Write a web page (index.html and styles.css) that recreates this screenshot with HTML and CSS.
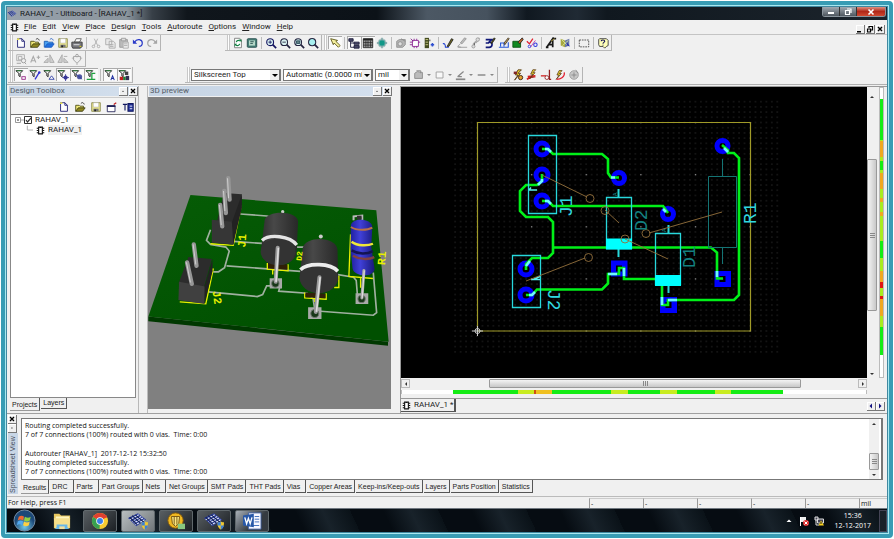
FILE: index.html
```html
<!DOCTYPE html>
<html lang="en">
<head>
<meta charset="utf-8">
<title>RAHAV_1 - Ultiboard</title>
<link rel="stylesheet" href="styles.css">
</head>
<body>
<svg class="defs" aria-hidden="true">
  <symbol id="chip" viewBox="0 0 12 12"><path d="M3.500 1.500h5v9h-5z" fill="#fff" stroke="#111" stroke-width="1.500"/><path d="M1 3h2M1 6h2M1 9h2M9 3h2M9 6h2M9 9h2" stroke="#111" stroke-width="1.600"/><path d="M5 1.500h2v1H5z"/></symbol>
  <symbol id="new" viewBox="0 0 14 14"><path d="M3 2h5l3 3v7H3z" fill="#fff" stroke="#181870"/><path d="M8 2v3h3" fill="none" stroke="#181870"/><path d="M3 1.500h2v2H2z" fill="#e8e050"/></symbol>
  <symbol id="open" viewBox="0 0 14 14"><path d="M2 12V5h4l1 1h4v2" fill="#f0e878" stroke="#4a4a10"/><path d="M2 12l3-4h8l-3 4z" fill="#908820" stroke="#3c3c10"/><path d="M8 3c2-2 3-1 4 1" fill="none" stroke="#222"/></symbol>
  <symbol id="openblue" viewBox="0 0 14 14"><path d="M1.500 12V5h4l1 1h5v2" fill="#48a0f0" stroke="#1858b0"/><path d="M2 12l3-4h8l-3 4z" fill="#2070e0" stroke="#1858c0"/><path d="M8 3c2-2 3-1 4 1" fill="none" stroke="#1858c0"/></symbol>
  <symbol id="save" viewBox="0 0 14 14"><path d="M2 2h10v10H2z" fill="#e8e490" stroke="#88884a"/><path d="M4 2h6v5H4z" fill="#fff" stroke="#aaa" stroke-width=".5"/><path d="M4 9h6v3H4z" fill="#777"/><path d="M5 10h2v2H5z" fill="#222"/></symbol>
  <symbol id="print" viewBox="0 0 14 14"><path d="M4 6l2-4h6l-2 4z" fill="#fff" stroke="#555"/><path d="M1 6h12v5l-2 2H2l-1-2z" fill="#77777d" stroke="#333"/><path d="M3 9h7" stroke="#eee"/><path d="M10 11h2" stroke="#e8e000"/></symbol>
  <symbol id="cut" viewBox="0 0 14 14"><path d="M5 2l4 8M9 2l-4 8" stroke="#aaa" fill="none"/><circle cx="4" cy="11" r="1.500" fill="none" stroke="#aaa"/><circle cx="10" cy="11" r="1.500" fill="none" stroke="#aaa"/></symbol>
  <symbol id="copy" viewBox="0 0 14 14"><path d="M2 2h5l2 2v5H2zM6 5h5l2 2v6H6z" fill="#e8e8e8" stroke="#aaa"/><path d="M7 9h4M7 11h4" stroke="#aaa"/></symbol>
  <symbol id="paste" viewBox="0 0 14 14"><path d="M2 3h9v9H2z" fill="#bbb" stroke="#999"/><path d="M4 1.500h5v3H4z" fill="#ddd" stroke="#999"/><path d="M6 6h6v7H6z" fill="#eee" stroke="#aaa"/><path d="M7 8h4M7 10h4" stroke="#aaa"/></symbol>
  <symbol id="undo" viewBox="0 0 14 14"><path d="M3 6c3-5 9-3 9 1 0 3-2 4-4 4" fill="none" stroke="#2838c8" stroke-width="1.400"/><path d="M1 3v5h5z" fill="#2838c8"/></symbol>
  <symbol id="redo" viewBox="0 0 14 14"><path d="M11 6C8 1 2 3 2 7c0 3 2 4 4 4" fill="none" stroke="#a5a5a5" stroke-width="1.400"/><path d="M13 3v5H8z" fill="#a5a5a5"/></symbol>
  <symbol id="refresh" viewBox="0 0 14 14"><path d="M3 1.500h6l2 2v9H3z" fill="#fff" stroke="#777"/><path d="M5 6c1-3 4-2 4-1M9 8c-1 3-4 2-4 1" fill="none" stroke="#108040" stroke-width="1.500"/><path d="M8 3h3v3zM3 11V8h3z" fill="#108040"/></symbol>
  <symbol id="fullscreen" viewBox="0 0 14 14"><rect x="1.500" y="2" width="11" height="10" rx="1" fill="#488078" stroke="#204848"/><path d="M3.500 4h7v6h-7z" fill="#b5d8c8"/><path d="M5 5.500h4M5 7.500h3" stroke="#204848"/></symbol>
  <symbol id="zoomin" viewBox="0 0 14 14"><circle cx="6" cy="6" r="4" fill="#d8f0f0" stroke="#151560" stroke-width="1.300"/><path d="M9 9l4 4" stroke="#151560" stroke-width="2"/><path d="M4 6h4M6 4v4" stroke="#151560"/></symbol>
  <symbol id="zoomout" viewBox="0 0 14 14"><circle cx="6" cy="6" r="4" fill="#d8f0f0" stroke="#252540" stroke-width="1.200"/><path d="M9 9l4 4" stroke="#252540" stroke-width="2"/><path d="M4 6h4" stroke="#252540"/></symbol>
  <symbol id="zoomwin" viewBox="0 0 14 14"><circle cx="6" cy="6" r="4" fill="#d8f0f0" stroke="#252540" stroke-width="1.200"/><path d="M9 9l4 4" stroke="#252540" stroke-width="2"/><path d="M4 4.500h4v3H4z" fill="#688" stroke="#245"/></symbol>
  <symbol id="zoomfull" viewBox="0 0 14 14"><circle cx="6" cy="6" r="4.200" fill="#a8f0f0" stroke="#252540" stroke-width="1.200"/><path d="M9 9l4 4" stroke="#252540" stroke-width="2"/></symbol>
  <symbol id="select" viewBox="0 0 14 14"><path d="M2 2l3 7 1-2 5 5 2-2-5-5 2-1z" fill="#f5f0a0" stroke="#555010"/></symbol>
  <symbol id="tree" viewBox="0 0 14 14"><path d="M1 2h5v3H1zM7 6h6v2.500H7zM7 10h6v3H7z" fill="#484868" stroke="#181838"/><path d="M3 5v7h4M3 7h4" fill="none" stroke="#181838"/></symbol>
  <symbol id="grid" viewBox="0 0 14 14"><path d="M1.500 2h11v10.500h-11z" fill="#999" stroke="#222"/><path d="M1.500 3h11" stroke="#222" stroke-width="2"/><path d="M1.500 6.500h11M1.500 9.500h11M4.500 4v8M7 4v8M10 4v8" stroke="#222" stroke-width=".8"/></symbol>
  <symbol id="board" viewBox="0 0 14 14"><circle cx="7" cy="7" r="5.200" fill="#a8c0c0"/><path d="M7 1v12M1 7h12" stroke="#70a0a0" stroke-width="1.500"/><path d="M4 4h6v6H4z" fill="#109888"/></symbol>
  <symbol id="greybox" viewBox="0 0 14 14"><path d="M2 5l3-2h7v6l-3 3H2z" fill="#b4b4b4" stroke="#909090"/><circle cx="6" cy="8" r="2.500" fill="#ddd" stroke="#909090"/><path d="M7 2l5 3" stroke="#888"/></symbol>
  <symbol id="partedit" viewBox="0 0 14 14"><path d="M4 4h7v7H4z" fill="#fff" stroke="#882090"/><path d="M2 2l3 3M1 6h3M1 9h3M6 2v2M9 2v2M6 11v2M9 11v2M11 6h2" stroke="#882090"/></symbol>
  <symbol id="partchip" viewBox="0 0 14 14"><path d="M2 1h5v12H2z" fill="#444c20"/><path d="M3 3h3M3 6h3M3 9h3" stroke="#d8d890"/><path d="M9 9h4M11 7v4" stroke="#3050d0" stroke-width="1.800"/><path d="M8 3v2" stroke="#222"/></symbol>
  <symbol id="pen" viewBox="0 0 14 14"><path d="M1 8c2-1 3 1 3 4h4" fill="none" stroke="#2040d0" stroke-width="1.300"/><path d="M6 11l5-9 2 1-5 8z" fill="#706820" stroke="#222"/></symbol>
  <symbol id="greypen" viewBox="0 0 14 14"><path d="M5 7l5-6 2 1-5 6z" fill="#bbb" stroke="#999"/><path d="M2 12h11M5 8l-3 3 4 1" fill="none" stroke="#999"/></symbol>
  <symbol id="greyvia" viewBox="0 0 14 14"><path d="M4 12V8l3-3M11 1L7 7" stroke="#aaa" stroke-width="1.500"/><circle cx="9" cy="3" r="2" fill="#ddd" stroke="#999"/><circle cx="4" cy="11" r="1.800" fill="#ddd" stroke="#999"/></symbol>
  <symbol id="follow" viewBox="0 0 14 14"><path d="M2 3h7l-3 3c5 0 4 6 0 6H2M2 7h4" fill="none" stroke="#101878" stroke-width="2"/><path d="M8 7l4-6 1 1-4 6z" fill="#666010" stroke="#222"/></symbol>
  <symbol id="linebus" viewBox="0 0 14 14"><path d="M1 12h11V6M3 11V7h4v4" fill="none" stroke="#2858d8" stroke-width="1.300"/><path d="M7 7l5-6 1 1-5 7z" fill="#d8a850" stroke="#333"/></symbol>
  <symbol id="copper" viewBox="0 0 14 14"><path d="M1 5h9v7H1z" fill="#108820" stroke="#085010"/><path d="M7 6l5-5 1 2-4 5z" fill="#c06028" stroke="#222"/></symbol>
  <symbol id="drc" viewBox="0 0 14 14"><path d="M1 5l3 3 4-6" fill="none" stroke="#e02030" stroke-width="1.500"/><path d="M5 12l6-8" stroke="#c030a0"/><circle cx="11" cy="9" r="2" fill="none" stroke="#3038e0" stroke-width="1.200"/><circle cx="4" cy="11" r="1.500" fill="none" stroke="#3038e0"/></symbol>
  <symbol id="text" viewBox="0 0 14 14"><path d="M2 12L9 2v10M4 9h6M10 2h3M1 12h3" fill="none" stroke="#181818" stroke-width="2"/><path d="M7 5l4-3" stroke="#c8b040"/></symbol>
  <symbol id="threed" viewBox="0 0 14 14"><path d="M2 2l5 2v8l-5-2z" fill="#a8a840"/><path d="M7 4l5-2v8l-5 2z" fill="#6878a8"/><path d="M3 3l8 8M4 10l7-6" stroke="#d8e8a0"/><path d="M9 6l4 5-4-1z" fill="#2830b0"/></symbol>
  <symbol id="marquee" viewBox="0 0 14 14"><path d="M1.500 3.500h11v8h-11z" fill="none" stroke="#444" stroke-dasharray="2 1"/></symbol>
  <symbol id="help" viewBox="0 0 14 14"><path d="M3 2h8l2 2v6l-2 1-2 2-2-2H3L2 9V3z" fill="#ffffb8" stroke="#333"/><path d="M5 5c0-2 4-2 4 0 0 1-2 1-2 3M7 9v1" fill="none" stroke="#181858" stroke-width="1.300"/></symbol>
  <symbol id="g1" viewBox="0 0 14 14"><path d="M2 2h9v7H2zM4 4h4v4H4z" fill="none" stroke="#aaa"/><circle cx="10" cy="9" r="2.500" fill="#eee" stroke="#999"/><path d="M11 11l2 2M2 12h5" stroke="#999"/></symbol>
  <symbol id="g2" viewBox="0 0 14 14"><path d="M2 11l3-7 3 7M3 9h4M9 5h4M11 3v4" fill="none" stroke="#aaa" stroke-width="1.300"/></symbol>
  <symbol id="g3" viewBox="0 0 14 14"><path d="M8 11V2l5 9zM1 11l5-5v5z" fill="#d0d0d0" stroke="#a8a8a8"/><path d="M2 4h4" stroke="#aaa"/></symbol>
  <symbol id="g4" viewBox="0 0 14 14"><path d="M6 11V2l-5 9zM13 11L8 6v5z" fill="#d0d0d0" stroke="#a8a8a8"/><path d="M8 4h4" stroke="#aaa"/></symbol>
  <symbol id="g5" viewBox="0 0 14 14"><path d="M3 4h8v4l-4 4-4-4z" fill="#eee" stroke="#999"/><circle cx="7" cy="3" r="1.500" fill="#eee" stroke="#999"/><path d="M1 6h2M11 6h2M7 12v2" stroke="#aaa"/></symbol>
  <symbol id="funnel" viewBox="0 0 14 14"><path d="M1 2h8L6 5v4L4.500 8V5z" fill="#fff" stroke="#222" stroke-width="1.100"/><path d="M2 2h6" stroke="#208030"/></symbol>
  <symbol id="area" viewBox="0 0 14 14"><path d="M2 5l3-2 6 1v7H2z" fill="#bbb" stroke="#888"/><path d="M4 2h5v3" stroke="#888" fill="none"/></symbol>
  <symbol id="square" viewBox="0 0 14 14"><path d="M2.500 3.500h8v7h-8z" fill="#f8f8f8" stroke="#999"/></symbol>
  <symbol id="pencolor" viewBox="0 0 14 14"><path d="M1 12h11" stroke="#888" stroke-width="2"/><path d="M3 9l7-6M3 9h5" stroke="#888" stroke-width="1.500"/></symbol>
  <symbol id="dash" viewBox="0 0 14 14"><path d="M2 7h9" stroke="#999" stroke-width="2"/></symbol>
  <symbol id="bolt" viewBox="0 0 14 14"><path d="M7 1L4 7h3l-4 6 7-8H7l4-4z" fill="#f0d830" stroke="#503010"/></symbol>
  <symbol id="newwin" viewBox="0 0 14 14"><path d="M1.500 5.500h9v7h-9z" fill="#fff" stroke="#222258"/><path d="M1 6h10" stroke="#222258" stroke-width="2"/><path d="M9 4l3-2" stroke="#c02020" stroke-width="1.500"/></symbol>
  <symbol id="rename" viewBox="0 0 14 14"><path d="M1 4h5M3.500 4v7M7 3h6v9H7z" fill="#2838a0" stroke="#101860" stroke-width="1.300"/><path d="M9 6h3M9 9h3" stroke="#fff"/></symbol>
  <symbol id="pcb" viewBox="0 0 24 20"><path d="M1 7l12-6 10 8-12 8z" fill="#2c3f9c"/><path d="M3 9l11-6M6 11l11-6M8 13l11-6M10 15l11-6" stroke="#dfe6f8" stroke-width="1.300"/><path d="M3 6l9 9M6 4l10 9M10 3l10 9" stroke="#101c50" stroke-width="1.300"/></symbol>
  <symbol id="shield" viewBox="0 0 10 10"><path d="M5 0c2 1 3 1 4 1 0 5-1 7-4 9-3-2-4-4-4-9 1 0 2 0 4-1z" fill="#f0c830"/><path d="M5 0C3 1 2 1 1 1v4h4zM5 5h4c-1 3-2 4-4 5z" fill="#3c80d8"/></symbol>
</svg>

<div class="window">
  <header class="titlebar">
    <svg class="app-icon" aria-hidden="true"><use href="#pcb"/></svg>
    <h1>RAHAV_1 - Ultiboard - [RAHAV_1 *]</h1>
    <div class="win-controls">
      <button aria-label="Minimize"><svg viewBox="0 0 10 8"><path d="M2 4h6v2H2z" fill="#fff"/></svg></button><button aria-label="Restore"><svg viewBox="0 0 10 8"><path d="M2.500 2.500h4v4h-4zM4 1h4v4" fill="none" stroke="#fff" stroke-width="1.200"/></svg></button><button class="close" aria-label="Close"><svg viewBox="0 0 10 8"><path d="M2.500 1.500l5 5M7.500 1.500l-5 5" stroke="#fff" stroke-width="1.600"/></svg></button>
    </div>
  </header>

  <nav class="menubar">
    <svg class="chip" aria-hidden="true"><use href="#chip"/></svg>
    <button><u>F</u>ile</button><button><u>E</u>dit</button><button><u>V</u>iew</button><button><u>P</u>lace</button><button><u>D</u>esign</button><button><u>T</u>ools</button><button><u>A</u>utoroute</button><button><u>O</u>ptions</button><button><u>W</u>indow</button><button><u>H</u>elp</button>
    <div class="mdi">
      <button class="mini" aria-label="Minimize document"><svg viewBox="0 0 8 8"><path d="M1 6h4v1.500H1z"/></svg></button><button class="mini" aria-label="Restore document"><svg viewBox="0 0 8 8"><path d="M1.500 4h3v3h-3zM3 3V1.500h3.500V5H5" fill="none" stroke="#000" stroke-width="1.200"/></svg></button><button class="mini" aria-label="Close document"><svg viewBox="0 0 8 8"><path d="M2 2l4 4M6 2L2 6" stroke="#000" stroke-width="1.400"/></svg></button>
    </div>
  </nav>

  <section class="toolbars">
    <div class="toolrow">
      <div class="group">
        <button aria-label="New"><svg><use href="#new"/></svg></button><button aria-label="Open"><svg><use href="#open"/></svg></button><button aria-label="Open samples"><svg><use href="#openblue"/></svg></button><button aria-label="Save"><svg><use href="#save"/></svg></button><button aria-label="Print"><svg><use href="#print"/></svg></button><i></i><button aria-label="Cut"><svg><use href="#cut"/></svg></button><button aria-label="Copy"><svg><use href="#copy"/></svg></button><button aria-label="Paste"><svg><use href="#paste"/></svg></button><button aria-label="Undo"><svg><use href="#undo"/></svg></button><button aria-label="Redo"><svg><use href="#redo"/></svg></button>
      </div>
      <div class="group spaced">
        <button aria-label="Refresh"><svg><use href="#refresh"/></svg></button><button aria-label="Full screen"><svg><use href="#fullscreen"/></svg></button><i></i><button aria-label="Zoom in"><svg><use href="#zoomin"/></svg></button><button aria-label="Zoom out"><svg><use href="#zoomout"/></svg></button><button aria-label="Zoom window"><svg><use href="#zoomwin"/></svg></button><button aria-label="Zoom full"><svg><use href="#zoomfull"/></svg></button>
      </div>
      <div class="group">
        <button class="on" aria-label="Select"><svg><use href="#select"/></svg></button><i></i><button class="on" aria-label="Design toolbox"><svg><use href="#tree"/></svg></button><button class="on" aria-label="Spreadsheet view"><svg><use href="#grid"/></svg></button><button aria-label="Board wizard"><svg><use href="#board"/></svg></button><i></i><button aria-label="Part wizard"><svg><use href="#greybox"/></svg></button><button aria-label="Edit part"><svg><use href="#partedit"/></svg></button><button aria-label="Place part"><svg><use href="#partchip"/></svg></button><i></i><button aria-label="Line"><svg><use href="#pen"/></svg></button><button aria-label="Place trace"><svg><use href="#greypen"/></svg></button><button aria-label="Via"><svg><use href="#greyvia"/></svg></button><button aria-label="Follow-me"><svg><use href="#follow"/></svg></button><button aria-label="Connection machine"><svg><use href="#linebus"/></svg></button><button aria-label="Copper area"><svg><use href="#copper"/></svg></button><button aria-label="Check"><svg><use href="#drc"/></svg></button><i></i><button aria-label="Text"><svg><use href="#text"/></svg></button><button aria-label="3D"><svg><use href="#threed"/></svg></button><i></i><button aria-label="Capture"><svg><use href="#marquee"/></svg></button><i></i><button aria-label="Help"><svg><use href="#help"/></svg></button>
      </div>
    </div>
    <div class="toolrow">
      <div class="group">
        <button aria-label="Properties"><svg><use href="#g1"/></svg></button><button aria-label="Text size"><svg><use href="#g2"/></svg></button><button aria-label="Rotate right"><svg><use href="#g3"/></svg></button><button aria-label="Rotate left"><svg><use href="#g4"/></svg></button><button aria-label="Lock"><svg><use href="#g5"/></svg></button>
      </div>
    </div>
    <div class="toolrow">
      <div class="group">
        <button class="on" aria-label="Select parts"><svg viewBox="0 0 14 14"><use href="#funnel" width="14" height="14"/><rect x="8" y="9" width="4" height="3" fill="#fff" stroke="#902080"/></svg></button><button aria-label="Select traces"><svg viewBox="0 0 14 14"><use href="#funnel" width="14" height="14"/><path d="M7 12l5-8" stroke="#3030d0" stroke-width="1.500"/><circle cx="12" cy="4" r="1.500" fill="#3030d0"/></svg></button><button aria-label="Select copper"><svg viewBox="0 0 14 14"><use href="#funnel" width="14" height="14"/><path d="M7 12l3-4 3 4z" fill="#fff" stroke="#2838a0"/></svg></button><button class="on" aria-label="Select vias"><svg viewBox="0 0 14 14"><use href="#funnel" width="14" height="14"/><circle cx="10" cy="10" r="2.500" fill="#383898"/><path d="M10 6v8M6 10h8" stroke="#383898"/></svg></button><button class="on" aria-label="Select pads"><svg viewBox="0 0 14 14"><use href="#funnel" width="14" height="14"/><circle cx="10" cy="9" r="3" fill="#5058a0"/><path d="M6 6l7 6" stroke="#2838a0"/></svg></button><button class="on" aria-label="Select others"><svg viewBox="0 0 14 14"><use href="#funnel" width="14" height="14"/><path d="M2 12h10M8 12V5h4" fill="none" stroke="#20a040" stroke-width="1.500"/></svg></button><i></i><button class="on" aria-label="Select attributes"><svg viewBox="0 0 14 14"><use href="#funnel" width="14" height="14"/><path d="M8 13l2-5 2 5M9 11h2" fill="none" stroke="#2030a0" stroke-width="1.200"/></svg></button><button class="on" aria-label="Select all"><svg viewBox="0 0 14 14"><use href="#funnel" width="14" height="14"/><path d="M2 9h4v4H2z" fill="#c02020"/><path d="M6 9h3v4H6z" fill="#208030"/><path d="M9 8h4v5H9z" fill="#303050"/><path d="M8 3h4v4H8z" fill="#444"/></svg></button>
      </div>
      <div class="group draw">
        <label class="combo layer"><select aria-label="Layer"><option>Silkscreen Top</option></select></label>
        <label class="combo width"><select aria-label="Line width"><option>Automatic (0.0000 mil</option></select></label>
        <label class="combo unit"><select aria-label="Unit"><option>mil</option></select></label>
        <button class="drop" aria-label="Fill"><svg><use href="#area"/></svg></button><button class="drop" aria-label="Shape"><svg><use href="#square"/></svg></button><button class="drop" aria-label="Line colour"><svg><use href="#pencolor"/></svg></button><button class="drop" aria-label="Line style"><svg><use href="#dash"/></svg></button>
      </div>
      <div class="group auto">
        <button aria-label="Autoroute"><svg viewBox="0 0 14 14"><use href="#bolt" width="14" height="14"/><path d="M2 3h4v3H2z" fill="#802828"/><circle cx="10" cy="10" r="2.500" fill="#e0a030" stroke="#301808"/></svg></button><button aria-label="Resume autoroute"><svg viewBox="0 0 14 14"><path d="M1 12l6-3h4M2 9l9-1" stroke="#d02020" stroke-width="2"/><use href="#bolt" x="2" width="12" height="12"/></svg></button><button aria-label="Stop autoroute"><svg viewBox="0 0 14 14"><path d="M1 8h6" stroke="#d02020" stroke-width="1.500"/><circle cx="8" cy="10" r="2.200" fill="#fff" stroke="#902020"/><path d="M11 1v11h2" fill="none" stroke="#902020" stroke-width="1.500"/></svg></button><button aria-label="Autoplace"><svg viewBox="0 0 14 14"><use href="#bolt" width="12" height="14"/><path d="M12 4c1 5-4 8-9 8" fill="none" stroke="#e02030" stroke-width="1.400"/></svg></button><button aria-label="Options"><svg viewBox="0 0 14 14"><circle cx="7" cy="7" r="5" fill="#c8c8c8" stroke="#999"/><path d="M4 7h6M7 4v6M9 1l3 4" stroke="#888"/></svg></button>
      </div>
    </div>
  </section>

  <main class="workspace">
    <aside class="panel toolbox">
      <div class="panel-title"><h2>Design Toolbox</h2><button class="mini" aria-label="Pin"><svg viewBox="0 0 8 8"><path d="M3 5h2L4 3.500z" fill="#555"/></svg></button><button class="mini" aria-label="Close toolbox"><svg viewBox="0 0 8 8"><path d="M2 2l4 4M6 2L2 6" stroke="#000" stroke-width="1.300"/></svg></button></div>
      <div class="project">
        <div class="project-tools">
          <button aria-label="New design"><svg><use href="#new"/></svg></button><button aria-label="Open design"><svg><use href="#open"/></svg></button><button aria-label="Save design"><svg><use href="#save"/></svg></button><button aria-label="New window"><svg><use href="#newwin"/></svg></button><button aria-label="Rename"><svg><use href="#rename"/></svg></button>
        </div>
        <ul class="tree">
          <li><svg class="twig" viewBox="0 0 18 10"><path d="M1.500 2.500h5v5h-5z" fill="#fff" stroke="#999"/><path d="M3 5h2" stroke="#333"/><path d="M7 5h3" stroke="#aaa"/><path d="M10.500 1.500h7v7h-7z" fill="#fff" stroke="#333"/><path d="M12 5l1.500 2L17 3" fill="none" stroke="#333" stroke-width="1.200"/></svg><span>RAHAV_1</span></li>
          <li class="child"><svg class="branch" viewBox="0 0 8 10"><path d="M1.500 0v5H8" fill="none" stroke="#aaa"/></svg><svg class="chip"><use href="#chip"/></svg><span class="picked">RAHAV_1</span></li>
        </ul>
      </div>
      <div class="tabs"><button class="current">Projects</button><button>Layers</button></div>
    </aside>

    <section class="panel preview">
      <div class="panel-title"><h2>3D preview</h2><button class="mini" aria-label="Pin preview"><svg viewBox="0 0 8 8"><path d="M3 5h2L4 3.500z" fill="#555"/></svg></button><button class="mini" aria-label="Close preview"><svg viewBox="0 0 8 8"><path d="M2 2l4 4M6 2L2 6" stroke="#000" stroke-width="1.300"/></svg></button></div>
      <div class="scene">
        <svg viewBox="9 -189 727 933" preserveAspectRatio="xMinYMin meet" role="img" aria-label="Board in 3D">
          <defs>
            <linearGradient id="can"><stop offset="0" stop-color="#2e2e2e"/><stop offset=".35" stop-color="#484848"/><stop offset="1" stop-color="#282828"/></linearGradient>
            <linearGradient id="res"><stop offset="0" stop-color="#2020a0"/><stop offset=".4" stop-color="#4040d8"/><stop offset="1" stop-color="#181878"/></linearGradient>
            <linearGradient id="pcbtop" x2=".6" y2="1"><stop offset="0" stop-color="#065c06"/><stop offset="1" stop-color="#005000"/></linearGradient>
          </defs>
          <path d="M10 468L727 543v12L10 482z" fill="#003800"/>
          <path d="M136 104L692 150 729 543 10 468z" fill="url(#pcbtop)"/>
          <g fill="none" stroke="#a0b0a0" stroke-width="5">
            <path d="M285 161l80 6 30 10M265 243l85 6M196 208l-12 32 12 12 46 8 10 12-14 50-18 12h-16M244 316l320 24 60 10 8 10 4 50M190 394l146 14 16-6 12-26h24M404 378l-4 14 85 6 18 16 6 40M525 452l158 12 10-8-10-120M455 260l25 0"/>
          </g>
          <g fill="none" stroke="#e8f000" stroke-width="4">
            <path d="M196 250l68 5 24-120M104 424l78 6 22-104h-5M366 308v18l62 5v-20M478 396v16l64 4v-18M615 222l-5 126 72 6M580 346v35h-14M645 352v30M382 326v16M508 414v10"/>
          </g>
          <path d="M368 308l58 4v16l-58-4zM480 396l60 4v13l-60-3z" fill="#302008"/>
          <path d="M373 353h37v31h-37zM488 440h40v35h-40zM630 398h38v32h-38z" fill="#a8aaa8"/>
          <g fill="#183818" stroke="#707870" stroke-width="3"><circle cx="390" cy="369" r="11"/><circle cx="508" cy="459" r="12"/><circle cx="648" cy="415" r="11"/></g>
          <path d="M236 98l54 4-26 150-64-6z" fill="#2c2c2c"/><path d="M200 178l62 6 4 68-66-5z" fill="#363636"/><path d="M290 102v40l-26 110-4-66z" fill="#222"/>
          <path d="M130 290l70 6-24 86-76-12z" fill="#2c2c2c"/><path d="M102 364l78 14-2 52-78-12z" fill="#404040"/><path d="M202 296v36l-24 98v-52z" fill="#222"/>
          <g stroke="#969696" stroke-width="13" stroke-linecap="round"><path d="M249 54l4 64M237 92l5 66M225 134l6 64M146 252l8 64M126 306l14 64"/></g>
          <g stroke="#d0d0d0" stroke-width="3"><path d="M247 54l3 60M235 92l4 60M223 134l5 60M144 252l8 60M124 306l12 60"/></g>
          <circle cx="412" cy="154" r="5" fill="#ccc"/><circle cx="526" cy="228" r="6" fill="#ccc"/>
          <path d="M358 180c4-30 98-32 100 4l-5 100c-30 50-96 30-106-14z" fill="url(#can)"/>
          <ellipse cx="398" cy="274" rx="52" ry="40" fill="#333"/><path d="M350 240c22-20 84-14 104 14" fill="none" stroke="#e4e4e4" stroke-width="10"/>
          <path d="M472 262c8-36 100-36 104 6l2 90c-16 52-104 46-116-4z" fill="url(#can)"/>
          <ellipse cx="520" cy="352" rx="57" ry="46" fill="#333"/><path d="M465 328c22-22 90-20 112 4" fill="none" stroke="#ececec" stroke-width="11"/>
          <path d="M397 262l-6 102M522 350l-11 104" stroke="#999" stroke-width="12" stroke-linecap="round"/><path d="M399 262l-7 102M524 350l-11 104" stroke="#ddd" stroke-width="5"/>
          <path d="M624 180v-12l26-2v14" fill="none" stroke="#bbb" stroke-width="6"/><path d="M634 166h14v12h-14z" fill="#303030"/>
          <path d="M616 196c2-26 64-22 64 4l-3 60 10 66c-6 28-62 22-66-2l-6-60z" fill="url(#res)"/>
          <path d="M616 200c18 12 50 10 64 2" fill="none" stroke="#b87048" stroke-width="6"/><path d="M618 244c18 14 50 12 64 6" fill="none" stroke="#f0e838" stroke-width="7"/><path d="M618 270c20 12 46 12 64 2" fill="none" stroke="#141450" stroke-width="8"/><path d="M622 286c20 12 48 12 64 4" fill="none" stroke="#804040" stroke-width="7"/>
          <path d="M655 330l-6 82" stroke="#aaa" stroke-width="9" stroke-linecap="round"/><path d="M656 330l-6 82" stroke="#e0e0e0" stroke-width="3"/>
          <g class="silk3d"><text transform="translate(300 262) rotate(-86)">J1</text><text transform="translate(202 392) rotate(82)">J2</text><text class="small" transform="translate(468 302) rotate(-84)">D2</text><text transform="translate(718 314) rotate(-86)">R1</text></g>
        </svg>
      </div>
    </section>

    <section class="editor">
      <div class="canvas">
        <svg viewBox="401 87 466 290" preserveAspectRatio="xMinYMin meet" role="img" aria-label="Board layout">
          <defs>
            <pattern id="dots" x="474.270" y="119.894" width="5.460" height="5.212" patternUnits="userSpaceOnUse"><rect x="2.230" y="2.100" width="1" height="1" fill="#3a3a3a"/></pattern>
            <pattern id="major" x="449.700" y="96.440" width="54.600" height="52.120" patternUnits="userSpaceOnUse"><rect x="26.800" y="25.560" width="1.200" height="1.200" fill="#999"/></pattern>
          </defs>
          <path d="M453 100h327v255H453z" fill="url(#dots)"/><path d="M477 122h275v210H477z" fill="url(#major)"/>
          <path d="M477.500 122.500h273V331h-273z" fill="none" stroke="#a09a28" stroke-width="1.200"/>
          <g fill="none" stroke="#00f" stroke-width="5"><circle cx="542" cy="149" r="6"/><circle cx="542" cy="175" r="6"/><circle cx="542" cy="201" r="6"/><circle cx="526" cy="269" r="6"/><circle cx="526" cy="295" r="6"/><circle cx="619" cy="178" r="5.500"/><circle cx="668" cy="214" r="5.500"/><circle cx="722.500" cy="146" r="5.500"/></g>
          <path fill="#00f" fill-rule="evenodd" d="M611 260.500h16.500v16H611zm5 5v6h6v-6zM660 297h17v16h-17zm5.500 5v6h6v-6zM714.500 271H731v16h-16.500zm5 5v6h6v-6z"/>
          <g fill="none" stroke="#00f018" stroke-width="2.600">
            <path d="M542 149h6l5 5h49l6 5v14l3 4.500h8"/><path d="M542 174v7l-5 4h-11l-6 6v20l6 6h22l5 5v31l-5 5h-16l-6 6v6"/><path d="M542 201h6l5 5h110l5 7"/><path d="M553 247.500h158l6 5v26h6"/><path d="M526 295h6l5-5.500h65l6-6V274h11v-6h5v11h38v26h6v-5h66l5-5V158l-5-5h-6v-3l-6-5"/>
          </g>
          <path d="M545 149h3l3 3M542 179v2l-4 4M545 201h3l3 3M530 261l-4 5M529 295h3l3-3M611 177.500h4M663 209l3 3M724 148l4 4M608 274h9M624 268v8M662 297v8M668 300h9M717 271v6" fill="none" stroke="#70f8ff" stroke-width="2.600"/>
          <g fill="none" stroke="#28d8dc" stroke-width="1.300"><path d="M528.500 135.500h28v78h-28zM512.500 255.500h28v52h-28zM606.500 197.500h25v51h-25zM655.500 233.500h25v51h-25z"/><path d="M618.500 189v8M618.500 249v8M668.500 225v8M668.500 285v8" stroke-width="2"/></g>
          <path d="M606 238.500h26v11h-26zM655 275h26v11h-26z" fill="#0ff"/>
          <path d="M708.500 176.500h28v71h-28zM722.500 159v17M722.500 248v16" fill="none" stroke="#147474"/>
          <path d="M529 190h8M529 190l2-2.500M531 279.500h9M533 279.500l7-3" fill="none" stroke="#58f0f0" stroke-width="1.500"/>
          <g fill="none" stroke="#94703c" stroke-width=".9"><path d="M542 175l45 22M526 281l59-23M605 210l14 13M722 212l-73 21M625 239l43 20"/><circle cx="590" cy="198.500" r="4"/><circle cx="588.500" cy="257.500" r="4"/><circle cx="605" cy="210.500" r="4"/><circle cx="646" cy="233.500" r="4"/><circle cx="625" cy="239" r="4"/></g>
          <g fill="none" stroke="#ccc"><circle cx="477.500" cy="331" r="2.500"/><path d="M472 331h11M477.500 326v10"/></g>
          <g class="silk"><text transform="translate(572 217) rotate(-90)">J1</text><text transform="translate(548 289) rotate(90)">J2</text><text transform="translate(756 224) rotate(-90)">R1</text><text class="dim" transform="translate(647 231) rotate(-90)">D2</text><text class="dim" transform="translate(695 268) rotate(-90)">D1</text><text class="pin" transform="translate(617 196) rotate(-90)">A</text><text class="pin" transform="translate(666 232) rotate(-90)">A</text></g>
        </svg>
      </div>
      <div class="vscroll scroll"><b class="arrow up"></b><b class="thumb"></b><b class="arrow down"></b></div>
      <div class="density vertical"></div>
      <div class="hscroll scroll"><b class="arrow left"></b><b class="thumb"></b><b class="arrow right"></b></div>
      <div class="density horizontal"></div>
      <div class="doc-tabs"><button class="doc"><svg class="chip"><use href="#chip"/></svg>RAHAV_1 *</button><span class="doc-nav"><button class="mini" aria-label="Previous tab"><svg viewBox="0 0 8 8"><path d="M5 1.500v5L2.500 4z" fill="#101080"/></svg></button><button class="mini" aria-label="Next tab"><svg viewBox="0 0 8 8"><path d="M3 1.500v5L5.500 4z" fill="#101080"/></svg></button></span></div>
    </section>
  </main>

  <section class="spreadsheet">
    <div class="side">
      <button class="mini" aria-label="Close view"><svg viewBox="0 0 8 8"><path d="M2 2l4 4M6 2L2 6" stroke="#000" stroke-width="1.300"/></svg></button><button class="mini" aria-label="Pin view"><svg viewBox="0 0 8 8"><path d="M3.500 3v2L5 4z" fill="#555"/></svg></button>
      <h2>Spreadsheet View</h2>
    </div>
    <div class="results">
      <div class="log">
        <div class="lines"><p>Routing completed successfully.</p><p>7 of 7 connections (100%) routed with 0 vias.&nbsp; Time: 0:00</p><p class="gap">Autorouter [RAHAV_1]&nbsp; 2017-12-12 15:32:50</p><p>Routing completed successfully.</p><p>7 of 7 connections (100%) routed with 0 vias.&nbsp; Time: 0:00</p></div>
        <div class="scroll logscroll"><b class="arrow up"></b><b class="thumb"></b><b class="arrow down"></b></div>
      </div>
      <div class="tabs"><button class="current">Results</button><button class="wide">DRC</button><button class="wide">Parts</button><button>Part Groups</button><button class="wide">Nets</button><button>Net Groups</button><button>SMT Pads</button><button>THT Pads</button><button class="wide">Vias</button><button>Copper Areas</button><button>Keep-ins/Keep-outs</button><button>Layers</button><button>Parts Position</button><button>Statistics</button></div>
    </div>
  </section>

  <footer class="status"><span class="hint">For Help, press F1</span><span>-</span><span>-</span><span>-</span><span>-</span><span>-</span><span class="unit-cell">mil</span></footer>

  <nav class="taskbar">
    <button class="start" aria-label="Start"><svg viewBox="0 0 24 24"><defs><radialGradient id="orb" cy=".8"><stop offset="0" stop-color="#70c8e8"/><stop offset="1" stop-color="#1c4878"/></radialGradient></defs><circle cx="12" cy="12" r="11" fill="url(#orb)" stroke="#7890a8"/><path d="M6 8q3-2 5.500 0l-1 4q-3-2-5.500 0z" fill="#f06830"/><path d="M12.500 8q3 2 6 0l-1 4q-3 2-6 0z" fill="#90d040"/><path d="M5 13q3-2 5.500 0l-1 4q-3-2-5.500 0z" fill="#50a8f0"/><path d="M11.500 13q3 2 6 0l-1 4q-3 2-6 0z" fill="#ffd040"/></svg></button>
    <button aria-label="Explorer"><svg viewBox="0 0 24 20"><path d="M3 2h6l2 2h10v14H3z" fill="#e8c860"/><path d="M5 5h15v8H5z" fill="#fff6c0"/><path d="M3 7h18l-1 11H4z" fill="#f6e08c"/><path d="M6 14h12v3l2 2H4l2-2z" fill="#68b8e8"/><path d="M9 16h6v3H9z" fill="#f0e0a0"/></svg></button>
    <button class="running" aria-label="Chrome"><svg viewBox="0 0 20 20"><circle cx="10" cy="10" r="9" fill="#f8cc30"/><path d="M10 10L2.200 5.500A9 9 0 0 1 17.800 5.500z" fill="#e04030"/><path d="M10 10L2.200 5.500A9 9 0 0 0 9.500 19z" fill="#38a050"/><path d="M10 6h8l-1-2H8z" fill="#e04030"/><circle cx="10" cy="10" r="4.200" fill="#fff"/><circle cx="10" cy="10" r="3.300" fill="#3c80e8"/></svg></button>
    <button class="running active" aria-label="Ultiboard"><svg viewBox="0 0 24 20"><use href="#pcb" width="22" height="19"/><use href="#shield" x="15" y="10" width="9" height="10"/></svg></button>
    <button class="running" aria-label="Multisim"><svg viewBox="0 0 20 20"><circle cx="9.500" cy="9.500" r="8.500" fill="#f0b820" stroke="#8a5c08"/><path d="M5 5h9l-1 8-3.500 3L6 13z" fill="#fce880" stroke="#705010"/><path d="M8 5v9M11 5v9" stroke="#705010"/><path d="M12 13h8v6h-8z" fill="#88c880"/></svg></button>
    <button class="running" aria-label="Ultiboard second window"><svg viewBox="0 0 24 20"><use href="#pcb" width="22" height="19"/><use href="#shield" x="15" y="10" width="9" height="10"/></svg></button>
    <button class="running lit" aria-label="Word"><svg viewBox="0 0 22 20"><path d="M7 1h14v18H7z" fill="#f8f8ff" stroke="#4060a0"/><path d="M14 5h5M14 8h5M14 11h5M9 15h10" stroke="#3868b8"/><path d="M1 4l12-2v15L1 15z" fill="#2858a8"/><path d="M3 6l2 7 2-6 2 6 2-7" fill="none" stroke="#fff" stroke-width="1.500"/></svg></button>
    <div class="tray">
      <svg viewBox="0 0 10 10"><path d="M2.500 6h5L5 3.500z" fill="#fff"/></svg>
      <svg viewBox="0 0 10 10"><path d="M1.500 1v9" stroke="#fff"/><path d="M2 1h5v5H2z" fill="#eee"/><circle cx="7" cy="7" r="3" fill="#e03030"/><path d="M5.500 5.500l3 3M8.500 5.500l-3 3" stroke="#fff"/></svg>
      <svg viewBox="0 0 10 10"><path d="M1 1h3v3H1zM3.500 3h6v4h-6z" fill="#445" stroke="#ddd"/><path d="M2 4v5h3" stroke="#ddd" fill="none"/><path d="M4.500 9.500l2.500-5 3 5z" fill="#f8d020"/><path d="M7 6v2" stroke="#222"/></svg>
      <time>15:36<br>12-12-2017</time>
      <button class="desktop" aria-label="Show desktop"></button>
    </div>
  </nav>
</div>
</body>
</html>
```

FILE: styles.css
```css
* { box-sizing: border-box; }
html, body { height: 100%; margin: 0; }
body { background: #fff; padding: 1px; font: 8px/10px Roboto, "Noto Sans", sans-serif; color: #222; }
button { border: 0; padding: 0; margin: 0; background: none; font: inherit; color: inherit; }
h1, h2, p, ul { margin: 0; padding: 0; font: inherit; font-weight: normal; }
svg { display: block; }
.defs { position: absolute; width: 0; height: 0; }

.window { display: flex; flex-direction: column; height: 100%; border: 4px solid #389cb4; border-radius: 4px; box-shadow: inset 0 0 0 1px #a8e8f0, inset 0 0 0 2px #4088a0; padding: 2px; background: #f0f0f0; overflow: hidden; }

.titlebar { display: flex; align-items: center; flex: none; height: 13px; background: linear-gradient(90deg, #98a2ac 0, #8a949c 120px, #384048 145px, #10161c 180px, #0c1218 370px, #4c5864 420px, #46525e 480px, #101820 520px, #202a34 570px, #10181f 600px, #1c242c 100%); }
.app-icon { width: 10px; height: 8px; }
.titlebar h1 { margin-left: 3px; color: #16181c; }
.win-controls { display: flex; align-self: flex-start; margin-left: auto; margin-right: 1px; height: 10px; border: 1px solid #8a949c; border-top: 0; border-radius: 0 0 3px 3px; overflow: hidden; }
.win-controls button { width: 17px; background: linear-gradient(#a0a8b0, #505860); border-right: 1px solid #333; display: flex; justify-content: center; align-items: center; }
.win-controls .close { width: 28px; border: 0; background: linear-gradient(#e09080, #b02818 50%, #d04830); }
.win-controls svg { width: 10px; height: 8px; }

.menubar { display: flex; align-items: center; flex: none; height: 15px; border-bottom: 1px solid #c4c4c4; padding-left: 3px; gap: 6px; }
.chip { width: 9px; height: 9px; flex: none; }
.menubar .chip { margin-right: -1px; }
.mdi { display: flex; margin-left: auto; gap: 1px; padding-right: 2px; align-self: flex-end; }
.mini { width: 9px; height: 9px; background: #f0f0f0; border-right: 1px solid #777; border-bottom: 1px solid #777; box-shadow: inset 1px 1px #fff; }
.mini svg { width: 8px; height: 8px; }

.toolbars { flex: none; border-bottom: 1px solid #b0b0b0; padding-bottom: 1px; }
.toolrow { display: flex; height: 16px; }
.group { display: flex; align-items: center; height: 16px; padding: 0 1px 0 6px; border-right: 1px solid #b4b4b4; border-bottom: 1px solid #b8b8b8; background: linear-gradient(90deg, transparent 2px, #c8c8c8 2px, #c8c8c8 3px, #fff 3px, #fff 4px, #c8c8c8 4px, #c8c8c8 5px, transparent 5px); }
.toolrow .group:first-child { margin-left: 1px; }
.toolrow .spaced { margin-left: 64px; }
.group button { width: 14px; height: 13px; display: flex; align-items: center; justify-content: center; flex: none; }
.group button svg { width: 12px; height: 12px; }
.group button.on { background: #fafafa; box-shadow: inset 1px 1px #aaa; }
.group i { width: 5px; height: 12px; background: linear-gradient(90deg, transparent 2px, #bbb 2px, #bbb 3px, transparent 3px); }
.toolrow .draw { margin-left: 52px; }
.auto { margin-left: 7px; }
.combo { position: relative; display: block; height: 12px; border: 1px solid #777; background: #fff; margin-right: 2px; }
.combo select { appearance: none; display: block; width: 100%; height: 10px; border: 0; padding: 0 10px 0 2px; background: none; font: inherit; color: inherit; overflow: hidden; }
.combo::before { content: ""; position: absolute; right: 0; top: 0; width: 9px; height: 10px; background: #f0f0f0; border-right: 1px solid #777; border-bottom: 1px solid #777; }
.combo::after { content: ""; position: absolute; right: 2px; top: 4px; border: 3px solid transparent; border-top-color: #000; border-bottom: 0; }
.layer { width: 90px; }
.width { width: 90px; }
.unit { width: 35px; }
.group .drop { width: 21px; justify-content: space-between; padding: 0 2px 0 1px; }
.drop::after { content: ""; border: 2px solid transparent; border-top-color: #888; border-bottom: 0; }

.workspace { flex: 1; min-height: 0; display: grid; grid-template-columns: 131px 245px minmax(0, 1fr); gap: 8px; padding: 1px 0 0 1px; border-bottom: 1px solid #a0a0a0; }
.panel { display: flex; flex-direction: column; min-height: 0; }
.toolbox { border-right: 1px solid #b8b8b8; padding-bottom: 2px; }
.preview { border-left: 1px solid #bbb; padding-bottom: 4px; }
.panel-title { display: flex; align-items: center; flex: none; height: 10px; margin-left: 1px; gap: 1px; color: #555c66; background: linear-gradient(90deg, #c6d4e4, #d4e0ee); }
.panel-title h2 { flex: 1; padding-left: 1px; }
.project { flex: 1; margin: 1px 2px 0 2px; background: #fff; border: 1px solid #888; border-top-color: #ccc; min-height: 0; }
.project-tools { display: flex; justify-content: flex-end; gap: 3px; height: 17px; padding: 2px 0 0; background: #f4f4f4; border-bottom: 1px solid #777; }
.project-tools button { width: 13px; }
.project-tools svg { width: 12px; height: 12px; }
.tree { list-style: none; padding: 0 1px; }
.tree li { display: flex; align-items: center; height: 10px; gap: 3px; }
.twig { width: 18px; height: 10px; margin-left: 2px; }
.child { padding-left: 14px; }
.branch { width: 7px; height: 10px; }
.picked { background: #f0f0f0; }
.tabs { display: flex; flex: none; font: 7px/10px "Liberation Sans", sans-serif; }
.tabs button { height: 11px; padding: 0 2px; border-right: 1px solid #555; border-bottom: 1px solid #555; margin-right: 1px; white-space: nowrap; }
.tabs .current { height: 13px; padding-top: 2px; border-bottom-color: #999; }
.toolbox .tabs { padding-left: 2px; }
.scene { flex: 1; min-height: 0; background: #808080; overflow: hidden; margin-right: 1px; margin-top: 1px; }
.scene svg { width: 100%; height: 100%; }
.silk3d text { font: 34px "Liberation Mono", monospace; font-weight: bold; fill: #e8f000; }
.silk3d .small { font-size: 24px; }

.editor { display: grid; min-height: 0; grid-template-columns: minmax(0, 1fr) 10px 10px; grid-template-rows: minmax(0, 1fr) 11px 9px 15px; border-left: 1px solid #999; border-top: 1px solid #999; }
.canvas { background: #000; min-height: 0; overflow: hidden; }
.canvas svg { width: 100%; height: 100%; }
.silk text { font: 18px "Liberation Mono", monospace; fill: #30d8e0; }
.silk .dim { fill: #148080; }
.silk .pin { font-size: 6px; fill: #20a0a0; }
.scroll { display: flex; align-items: center; background: #f0f0f0; }
.vscroll, .logscroll { flex-direction: column; }
.thumb { flex: none; border: 1px solid #999; border-radius: 1px; background: linear-gradient(90deg, #f4f4f4, #c8c8c8); display: flex; align-items: center; justify-content: center; }
.thumb::after { content: ""; width: 5px; height: 5px; background: repeating-linear-gradient(#888 0 1px, transparent 1px 2px); }
.vscroll .thumb { width: 10px; height: 152px; margin: auto 0; }
.vscroll { padding-top: 5px; }
.hscroll .thumb { width: 67%; height: 9px; margin-left: 79px; margin-right: auto; background: linear-gradient(#f4f4f4, #c8c8c8); }
.hscroll .thumb::after { background: repeating-linear-gradient(90deg, #888 0 1px, transparent 1px 2px); }
.arrow { flex: none; width: 9px; height: 9px; display: flex; align-items: center; justify-content: center; }
.arrow::after { content: ""; border: 2px solid transparent; }
.up::after { border-bottom-color: #333; border-top: 0; }
.down::after { border-top-color: #333; border-bottom: 0; }
.left::after { border-right-color: #333; border-left: 0; }
.right::after { border-left-color: #333; border-right: 0; }
.hscroll .arrow { border: 1px solid #bbb; }
.density { border: 1px solid #bbb; }
.density.vertical { width: 5px; margin: 0 2px; background: linear-gradient(#fff 11px, #14ec14 11px 52px, #a8ec20 52px 53px, #f0a820 53px 69px, #a8ec20 69px 73px, #14ec14 73px 82px, #a8ec20 82px 85px, #f0a820 85px 101px, #a8ec20 101px 110px, #f0a820 110px 114px, #a8ec20 114px 124px, #f0a820 124px 128px, #a8ec20 128px 153px, #14ec14 153px 170px, #a8ec20 170px 183px, #f0a820 183px 194px, #e01414 194px 200px, #a8ec20 200px 208px, #e01414 208px 211px, #f0a820 211px 228px, #a8ec20 228px 239px, #14ec14 239px 267px, #fff 267px); }
.density.horizontal { height: 4px; margin: 1px 0 0; border-width: 0 1px; background: linear-gradient(90deg, #fff 51px, #14ec14 51px 116px, #c8ec20 116px 132px, #d05010 132px 134px, #f0c020 134px 150px, #14ec14 150px 209px, #c8ec20 209px 226px, #14ec14 226px 258px, #c8ec20 258px 275px, #14ec14 275px 313px, #c8ec20 313px 329px, #14ec14 329px 381px, #fff 381px); }
.hscroll, .density.horizontal { grid-column: 1; }
.doc-tabs { grid-column: 1 / -1; display: flex; align-items: flex-start; border-top: 1px solid #999; }
.doc { display: flex; align-items: center; gap: 3px; height: 13px; padding: 0 1px 0 1px; border-right: 2px solid #555; border-bottom: 1px solid #555; }
.doc-nav { display: flex; margin: 3px 2px 0 auto; }

.spreadsheet { flex: none; display: flex; height: 83px; padding: 1px 4px 2px 1px; gap: 2px; border-bottom: 1px solid #bbb; }
.side { width: 11px; display: flex; flex-direction: column; flex: none; }
.side h2 { writing-mode: vertical-rl; transform: rotate(180deg); flex: 1; width: 10px; font: 7px/10px "Liberation Sans", sans-serif; background: #c8d6e6; color: #444c58; white-space: nowrap; padding-top: 1px; }
.results { flex: 1; min-width: 0; padding-top: 3px; }
.log { display: flex; height: 62px; background: #fff; border: 1px solid #777; border-right-width: 2px; }
.lines { flex: 1; padding: 2px 3px; font: 7px/9px "Open Sans", sans-serif; color: #111; }
.lines .gap { margin-top: 10px; }
.logscroll { width: 10px; margin-right: 2px; }
.logscroll .thumb { width: 10px; height: 17px; margin-top: auto; }
.results .tabs button { height: 13px; padding-top: 1px; }
.results .tabs .current { height: 14px; padding-top: 2px; }
.results .tabs .wide { padding-right: 5px; }

.status { flex: none; display: flex; align-items: flex-end; height: 12px; padding-left: 1px; border-bottom: 1px solid #707880; font: 7px/9px "Open Sans", sans-serif; color: #111; }
.status span { width: 54px; height: 10px; border-left: 1px solid #999; border-top: 1px solid #ccc; padding-left: 1px; }
.status .hint { flex: 1; border: 0; padding: 0; }
.status .unit-cell { width: 28px; }

.taskbar { flex: none; display: flex; align-items: center; height: 23px; gap: 4px; background: repeating-linear-gradient(65deg, #060c12 0 30px, #18222a 55px, #0a1218 80px); }
.taskbar > button { width: 34px; height: 22px; display: flex; align-items: center; justify-content: center; border-radius: 2px; }
.taskbar > button svg { width: 22px; height: 18px; }
.taskbar > .start svg { width: 23px; height: 23px; }
.running { background: linear-gradient(135deg, #585e62, #1c2024); border: 1px solid #60686c; }
.taskbar > .active { background: linear-gradient(135deg, #b8bec0, #70767a); }
.taskbar > .lit { background: linear-gradient(135deg, #a8b0b8, #343a40 60%); }
.tray { margin-left: auto; display: flex; align-items: center; gap: 5px; height: 100%; color: #fff; }
.tray svg { width: 10px; height: 10px; }
.tray time { text-align: center; margin: 0 3px 0 5px; font: 7px/10px "Open Sans", sans-serif; }
.desktop { width: 8px; height: 22px; border: 1px solid #445; background: #182028; }
```
